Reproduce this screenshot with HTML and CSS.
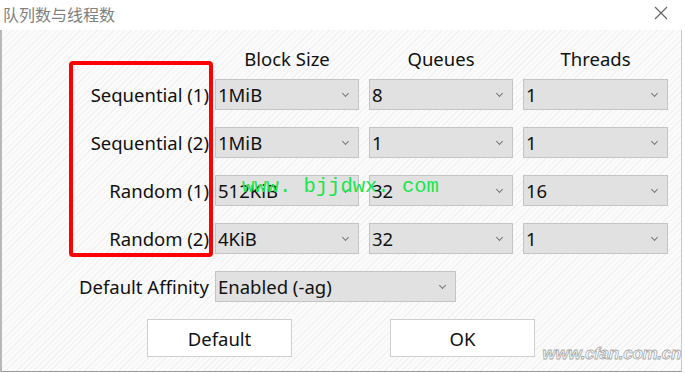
FILE: index.html
```html
<!DOCTYPE html>
<html lang="zh">
<head>
    <meta charset="UTF-8">
    <title>队列数与线程数</title>
    <link rel="stylesheet" href="styles.css">
</head>
<body>
    <div class="dialog">
        <div class="titlebar">
            <span class="title">队列数与线程数</span>
            <svg class="close" width="14" height="14" viewBox="0 0 14 14">
                <path d="M1 1 L13 13 M13 1 L1 13" stroke="#666" stroke-width="1.2" fill="none"/>
            </svg>
        </div>

        <div class="content">
            <div class="heads">
                <span></span>
                <span>Block Size</span>
                <span>Queues</span>
                <span>Threads</span>
            </div>

            <div class="rows">
                <div class="label">Sequential (1)</div>
                <div class="select">1MiB</div>
                <div class="select">8</div>
                <div class="select">1</div>

                <div class="label">Sequential (2)</div>
                <div class="select">1MiB</div>
                <div class="select">1</div>
                <div class="select">1</div>

                <div class="label">Random (1)</div>
                <div class="select">512KiB</div>
                <div class="select">32</div>
                <div class="select">16</div>

                <div class="label">Random (2)</div>
                <div class="select">4KiB</div>
                <div class="select">32</div>
                <div class="select">1</div>

                <div class="label">Default Affinity</div>
                <div class="select wide">Enabled (-ag)</div>

                <!-- annotation box and watermark lie over the grid -->
                <div class="redbox"></div>
                <div class="mark">www. bjjdwx. com</div>
            </div>

            <div class="buttons">
                <button class="btn">Default</button>
                <button class="btn">OK</button>
            </div>

            <div class="cfan">www.cfan.com.cn</div>
        </div>
    </div>
</body>
</html>
```

FILE: styles.css
```css
body {
    margin: 0;
    font-family: "Noto Sans", "Open Sans", sans-serif;
    color: #111;
    background: #fff;
}

.dialog {
    width: 682px;
    height: 372px;
    display: flex;
    flex-direction: column;
}

.titlebar {
    height: 28px;
    background: #fff;
    display: flex;
    align-items: center;
    justify-content: space-between;
    padding: 0 14px 2px 3px;
}

.title {
    font-family: "Noto Sans CJK SC", sans-serif;
    font-size: 16px;
    color: #808080;
}

.close {
    margin-top: -2px;
}

.content {
    flex: 1;
    position: relative;
    border-left: 2px solid #b8b8b8;
    border-bottom: 1px solid #9a9a9a;
    border-right: 1px solid #c8c8c8;
    background-color: #fafafa;
    background-image: repeating-linear-gradient(135deg, #fbfbfb 0, #fbfbfb 3px, #f1f1f1 3px, #f1f1f1 4px);
}

.heads,
.rows {
    display: grid;
    grid-template-columns: 134px 144px 144px 145px;
    column-gap: 10px;
    margin-left: 69px;
}

.heads {
    margin-top: 17px;
    height: 24px;
    font-size: 18.5px;
    line-height: 24px;
    text-align: center;
}

.rows {
    position: relative;
    margin-top: 8px;
    grid-auto-rows: 31px;
    row-gap: 17px;
}

.label {
    font-size: 18.5px;
    line-height: 31px;
    text-align: right;
    white-space: nowrap;
    padding-right: 6px;
    margin-right: -10px;
}

.select {
    position: relative;
    background: #e1e1e1;
    border: 1px solid #c4c4c4;
    font-size: 18.5px;
    line-height: 29px;
    padding-left: 2px;
}

.select::after {
    content: "";
    position: absolute;
    right: 10px;
    top: 11px;
    width: 4px;
    height: 4px;
    border-right: 1px solid #777;
    border-bottom: 1px solid #777;
    transform: rotate(45deg);
}

.select.wide {
    grid-column: 2 / 4;
    margin-right: 57px;
}

.redbox {
    position: absolute;
    left: -2px;
    top: -18px;
    width: 136px;
    height: 188px;
    border: 4px solid #ff0000;
    border-radius: 4px;
}

.mark {
    position: absolute;
    left: 171px;
    top: 96px;
    font-family: "Liberation Mono", monospace;
    font-size: 20.5px;
    color: #19e64c;
}

.buttons {
    display: flex;
    gap: 98px;
    margin: 17px 0 0 145px;
}

.btn {
    width: 145px;
    height: 38px;
    background: #fff;
    border: 1px solid #cfcfcf;
    font-family: "Noto Sans", sans-serif;
    font-size: 18.5px;
    color: #111;
}

.cfan {
    position: absolute;
    right: 0;
    bottom: 7px;
    font-family: "Liberation Sans", sans-serif;
    font-size: 17px;
    font-weight: bold;
    font-style: italic;
    letter-spacing: -0.3px;
    color: #fff;
    -webkit-text-stroke: 0.8px #a8a8a8;
}
```
